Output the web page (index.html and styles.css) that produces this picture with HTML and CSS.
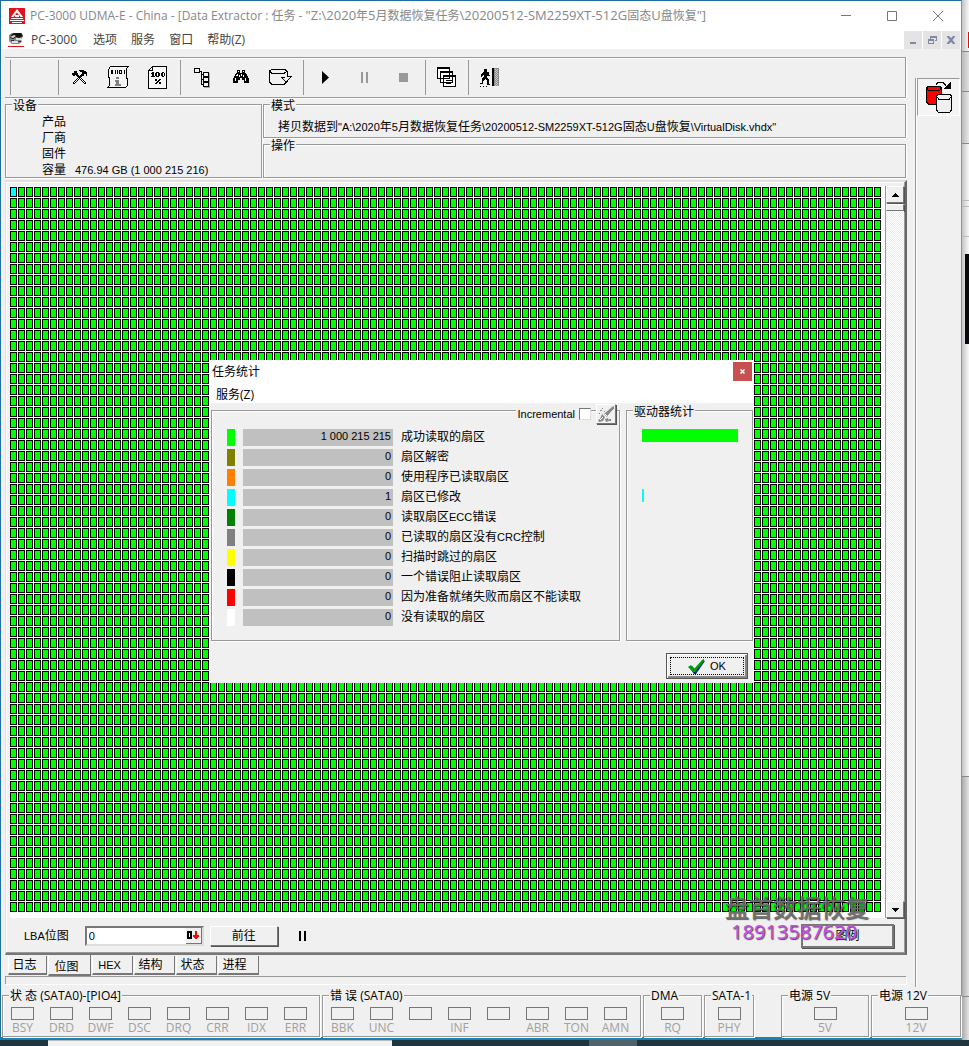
FILE: index.html
```html
<!DOCTYPE html>
<html lang="zh-CN">
<head>
<meta charset="utf-8">
<title>PC-3000 UDMA-E - Data Extractor</title>
<link rel="stylesheet" href="styles.css">
</head>
<body>
<div class="window">
  <header class="titlebar">
    <svg class="app-icon" viewBox="0 0 16 16"><path fill="#e0141c" d="M0 0h16v16H0z"/><path fill="#fff" d="M8 1l6 8h-2.500L8 4.500 4.500 9H2zM6 7h4v2H6zM2 10h12v1H2zM1 12h14v1H1zM3 14h10v1H3z"/></svg>
    <h1>PC-3000 UDMA-E - China - [Data Extractor : 任务 - <span class="path">"Z:\2020</span>年<span class="path">5</span>月数据恢复任务<span class="path">\20200512-SM2259XT-512G</span>固态<span class="path">U</span>盘恢复<span class="path">"]</span></h1>
    <div class="caption-buttons">
      <button aria-label="最小化"><svg viewBox="0 0 12 12"><path d="M1 5.500h10"/></svg></button>
      <button aria-label="最大化"><svg viewBox="0 0 12 12"><path d="M1.500 1.500h9v9h-9z"/></svg></button>
      <button aria-label="关闭"><svg viewBox="0 0 12 12"><path d="M1 1l10 10M11 1L1 11"/></svg></button>
    </div>
  </header>
  <nav class="menubar">
    <svg class="doc-icon" viewBox="0 0 16 16"><path fill="#888" d="M1 3l3-2h10l1 4-2 2 1 3-3 2H4L1 9z"/><path fill="#111" d="M3 3l3-2h7l2 3-4 2-3-1-3 2-3-1z"/><path fill="#ddd" d="M2 5l4-2 2 1-3 2zM8 6h5v2H8zM4 9h6v2H4z"/><path fill="#333" d="M3 8h3v1H3zM10 9h3v1h-3z"/><path fill="#e01010" d="M0 14h16v1H0z"/></svg>
    <button>PC-3000</button><button>选项</button><button>服务</button><button>窗口</button><button>帮助(Z)</button>
    <div class="mdi-buttons">
      <button aria-label="最小化子窗口"><svg viewBox="0 0 10 10"><path d="M2 7h6v2H2z"/></svg></button>
      <button aria-label="还原子窗口"><svg viewBox="0 0 10 10"><path d="M3 1h7v5H8V5h1V3H4v1H3zM1 4h6v5H1zM2 6v2h4V6z" fill-rule="evenodd"/></svg></button>
      <button aria-label="关闭子窗口"><svg viewBox="0 0 10 10"><path d="M1 1h2l2 2 2-2h2v1L6.500 5 9 8v1H7L5 7 3 9H1V8l2.500-3L1 2z"/></svg></button>
    </div>
  </nav>

  <div class="workspace">
    <main class="main">
      <div class="toolbar">
        <div class="tool-group blank"></div>
        <div class="tool-group g-a">
          <button aria-label="工具"><svg width="17" height="17" viewBox="0 0 17 17" shape-rendering="crispEdges"><path fill="none" stroke="#000" stroke-width="2.500" d="M2 15l9-9M6 6l9 9"/><path fill="none" stroke="#fff" d="M2.500 14.500l5-5M9 9l5.500 5.500"/><path d="M1 4h2V2h3v2l1 1v2H5V6H4v1H2V6H1zM8 1h5v1h2v1h1v4h-1V5h-2v2h-3V5h1V3H9V2H8z"/></svg></button>
          <button aria-label="信息"><svg width="23" height="23" viewBox="0 0 23 23" shape-rendering="crispEdges"><path fill="#f4f4f4" stroke="#000" d="M3.500.500h18l-2 2v8l1 4v5l-2 2H.500l2-2v-5l-1-6v-5z"/><path fill="none" stroke="#000" d="M4.500 4.500h1v3h-1zM8.500 4v4M10.500 4v4M12.500 4.500h2v3h-2zM17.500 4v4"/><path fill="#808080" d="M9 11h3v2H9zM8 14h4v4h2v2H8v-2h1v-2H8z"/></svg></button>
          <button aria-label="百分比"><svg width="19" height="23" viewBox="0 0 19 23" shape-rendering="crispEdges"><path fill="#f8f8f8" stroke="#000" d="M4.500.500h14v22H.500v-18z"/><path fill="none" stroke="#000" d="M4.500 1v3.500H1"/><path fill-rule="evenodd" d="M4 6h2v4h1v1H3v-1h1V8H3V7h1zM8 6h3v1h1v3h-1v1H8v-1H7V7h1zM9 7v3h1V7zM14 6h2v1h1v3h-1v1h-2v-1h-1V7h1zM14.500 7v3h1V7z"/><path d="M7 13h2v2H7zM11 13h2v1h-1v1h-1v1h-1v1H9v1H7v-1h1v-1h1v-1h1v-1h1zM11 16h2v2h-2z"/></svg></button>
        </div>
        <div class="tool-group g-b">
          <button aria-label="树"><svg width="17" height="21" viewBox="0 0 17 21" shape-rendering="crispEdges"><path fill="#aaa" d="M14 6h2v15h-6v-2h4z"/><path fill="#f4f4f4" stroke="#000" d="M.500 1.500h5v4h-5zM9.500 5.500h5v4h-5zM9.500 10.500h5v4h-5zM9.500 15.500h5v4h-5z"/><path fill="none" stroke="#000" d="M6 4.500h1.500v13H9M8 7.500h1M8 12.500h1"/></svg></button>
          <button aria-label="查找"><svg width="17" height="15" viewBox="0 0 17 15" shape-rendering="crispEdges"><path d="M4 0h3v3h2V0h3v3h1l3 6v4h-5v-3H9V8H7v2H5v3H0V9l3-6h1z"/><path fill="#fff" d="M5 1h1v1H5zM10 1h1v1h-1zM4 4h1v2H3zM8 4h1v2H8zM2 8h1v3H2zM12 8h1v3h-1zM6 5h1v2H6zM10 5h1v2h-1z"/></svg></button>
          <button aria-label="磁盘"><svg width="23" height="19" viewBox="0 0 23 19" shape-rendering="crispEdges"><path fill="none" stroke="#000" d="M.500 3L3 1h12l3 2-3 2.500H3zM.500 3v11L3 16.500h12l3-3V12M18.500 3v5H22v1l-5 5-5-5h4"/></svg></button>
        </div>
        <div class="tool-group g-c">
          <button aria-label="开始"><svg width="7" height="13" viewBox="0 0 7 13"><path d="M0 0l7 6.500L0 13z"/></svg></button>
          <button aria-label="暂停"><svg width="7" height="11" viewBox="0 0 7 11"><path fill="#999" d="M0 0h2v11H0zM5 0h2v11H5z"/></svg></button>
          <button aria-label="停止"><svg width="9" height="9" viewBox="0 0 9 9"><path fill="#999" d="M0 0h9v9H0z"/></svg></button>
        </div>
        <div class="tool-group g-d">
          <button aria-label="窗口列表"><svg width="19" height="21" viewBox="0 0 19 21" shape-rendering="crispEdges"><path fill="#fff" stroke="#000" d="M.500.500h12v11H.500zM3.500 4.500h12v11h-12zM6.500 8.500h12v11h-12z"/><path stroke="#000" d="M0 1.500h13M3 5.500h13M6 9.500h13M9 13.500h7M9 16.500h5"/></svg></button>
        </div>
        <div class="tool-group g-e">
          <button aria-label="退出"><svg width="19" height="19" viewBox="0 0 19 19" shape-rendering="crispEdges"><path d="M4 1h3v3h2v2l1 2H8V7L7 9l2 3v4h1v1H7v-4l-2-2-2 3v2H0v-1h2v-4l2-3V6L2 9H1V6l3-2zM0 18h1v1H0zM3 18h1v1H3zM6 18h1v1H6z"/><path d="M12 0h2v18h-2z"/><path fill="#888" d="M14 0h5v18h-5z"/><path stroke="#ccc" stroke-dasharray="1 1" d="M15.500 1v17M17.500 1v17"/><path stroke="#ccc" stroke-dasharray="1 1" d="M16.500 2v16"/></svg></button>
        </div>
      </div>

      <div class="info">
        <fieldset class="group device">
          <legend>设备</legend>
          <dl>
            <dt>产品</dt><dd></dd>
            <dt>厂商</dt><dd></dd>
            <dt>固件</dt><dd></dd>
            <dt>容量</dt><dd class="n">476.94 GB (1 000 215 216)</dd>
          </dl>
        </fieldset>
        <fieldset class="group mode">
          <legend>模式</legend>
          <p>拷贝数据到<span class="n">"A:\2020</span>年<span class="n">5</span>月数据恢复任务<span class="n">\20200512-SM2259XT-512G</span>固态<span class="n">U</span>盘恢复<span class="n">\VirtualDisk.vhdx"</span></p>
        </fieldset>
        <fieldset class="group operation">
          <legend>操作</legend>
        </fieldset>
      </div>

      <section class="page">
        <div class="map-row">
          <div class="map"><div class="sectors"><div class="current"></div></div></div>
          <div class="scrollbar">
            <button aria-label="向上滚动"><svg width="7" height="4" viewBox="0 0 7 4" shape-rendering="crispEdges"><path d="M3 0h1v1h1v1h1v1h1v1H0V3h1V2h1V1h1z"/></svg></button>
            <div class="thumb"></div>
            <div class="track"></div>
            <button aria-label="向下滚动"><svg width="7" height="4" viewBox="0 0 7 4" shape-rendering="crispEdges"><path d="M0 0h7v1H6v1H5v1H4v1H3V3H2V2H1V1H0z"/></svg></button>
          </div>
        </div>
        <div class="goto">
          <label for="lba"><span class="n">LBA</span>位图</label>
          <div class="lba-box"><input id="lba" class="n" type="text" value="0"><button aria-label="十进制"><svg width="12" height="8" viewBox="0 0 12 8" shape-rendering="crispEdges"><path fill-rule="evenodd" d="M0 0h4l1 1v6L4 8H0zM2 2v4h1V2z"/><path fill="#f00" d="M8 0h2v4h2v1l-2 3H8L6 5V4h2z"/></svg></button></div>
          <button class="raised go">前往</button>
          <button class="hold" aria-label="暂停"></button>
          <button class="raised legend-button">图例</button>
          <div class="watermark"><strong>盘首数据恢复</strong><span>18913587620</span></div>
        </div>
      </section>
      <div class="tabs">
        <button>日志</button><button class="active">位图</button><button class="n">HEX</button><button>结构</button><button>状态</button><button>进程</button>
      </div>
      <div class="progress-line"></div>
    </main>
    <aside class="side">
      <button aria-label="复制磁盘"><svg width="27" height="32" viewBox="0 0 27 32" shape-rendering="crispEdges"><path fill="#f00" stroke="#000" d="M1.500 7l2-2h11l2 2v14l-2 2h-11l-2-2z"/><path fill="none" stroke="#000" d="M1.500 7l2 2.500h11l2-2.500"/><path fill="#f0f0f0" stroke="#000" d="M11.500 15l2-2h11l2 2v14l-2 2.500h-11l-2-2.500z"/><path fill="none" stroke="#000" d="M11.500 15l2 3h11l2-3M11 3.500l2-2h5l3 3"/><path d="M26 1v7h-8z"/></svg></button>
    </aside>
  </div>

  <footer class="status">
    <fieldset class="group"><legend>状 态 (SATA0)-[PIO4]</legend>
      <ul class="leds eight"><li>BSY</li><li>DRD</li><li>DWF</li><li>DSC</li><li>DRQ</li><li>CRR</li><li>IDX</li><li>ERR</li></ul></fieldset>
    <fieldset class="group"><legend>错 误 (SATA0)</legend>
      <ul class="leds eight"><li>BBK</li><li>UNC</li><li></li><li>INF</li><li></li><li>ABR</li><li>TON</li><li>AMN</li></ul></fieldset>
    <fieldset class="group"><legend>DMA</legend><ul class="leds"><li>RQ</li></ul></fieldset>
    <fieldset class="group"><legend>SATA-1</legend><ul class="leds"><li>PHY</li></ul></fieldset>
    <fieldset class="group"><legend>电源 5V</legend><ul class="leds"><li>5V</li></ul></fieldset>
    <fieldset class="group"><legend>电源 12V</legend><ul class="leds"><li>12V</li></ul></fieldset>
  </footer>

  <div class="dialog" role="dialog" aria-labelledby="dialog-title">
    <div class="dialog-head">
      <h2 id="dialog-title">任务统计</h2>
      <button class="dialog-close" aria-label="关闭"><svg width="5" height="5" viewBox="0 0 5 5"><path stroke="#fff" stroke-width="1.500" d="M.500.500l4 4M4.500.500l-4 4"/></svg></button>
    </div>
    <div class="dialog-menu"><button>服务(Z)</button></div>
    <div class="dialog-body">
      <fieldset class="group stats">
        <div class="options">
          <label class="n" for="incremental">Incremental</label>
          <input type="checkbox" id="incremental">
          <button class="raised clear" aria-label="清除"><svg width="18" height="18" viewBox="0 0 18 18"><path fill="#888" d="M17 1v3l-7 8-3-3 8-7zM5 9l3 3-2 4-4 1-1-2 2-1zM8 14l3-1 1 3-3 1zM3 5h2v1H3zM5 3h1v1H5zM7 6h1v1H7zM2 8h1v1H2zM12 14h2v2h-2z"/><path stroke="#fff" fill="none" d="M16.500 4.500l-6 7M3 15l3-3M8 9l2 2"/></svg></button>
        </div>
        <table>
          <tr><td class="lime"></td><td class="count">1 000 215 215</td><th scope="row">成功读取的扇区</th></tr>
          <tr><td class="olive"></td><td class="count">0</td><th scope="row">扇区解密</th></tr>
          <tr><td class="orange"></td><td class="count">0</td><th scope="row">使用程序已读取扇区</th></tr>
          <tr><td class="cyan"></td><td class="count">1</td><th scope="row">扇区已修改</th></tr>
          <tr><td class="green"></td><td class="count">0</td><th scope="row">读取扇区<span class="n">ECC</span>错误</th></tr>
          <tr><td class="gray"></td><td class="count">0</td><th scope="row">已读取的扇区没有<span class="n">CRC</span>控制</th></tr>
          <tr><td class="yellow"></td><td class="count">0</td><th scope="row">扫描时跳过的扇区</th></tr>
          <tr><td class="black"></td><td class="count">0</td><th scope="row">一个错误阻止读取扇区</th></tr>
          <tr><td class="red"></td><td class="count">0</td><th scope="row">因为准备就绪失败而扇区不能读取</th></tr>
          <tr><td class="white"></td><td class="count">0</td><th scope="row">没有读取的扇区</th></tr>
        </table>
      </fieldset>
      <fieldset class="group drive">
        <legend>驱动器统计</legend>
        <div class="bars"><div class="bar lime"></div><div class="bar cyan"></div></div>
      </fieldset>
    </div>
    <div class="dialog-actions">
      <button class="ok n"><span><svg width="17" height="15" viewBox="0 0 17 15"><path fill="#003080" d="M1 8l3-1 3 3 8-9 2 1-9 13H6z"/><path fill="#00a000" d="M0 8l3-2 3 4 8-9 2-1v2L7 13H5z"/></svg>OK</span></button>
    </div>
  </div>
</div>
<div class="behind"><i class="b-title"></i><i class="b-tool"></i><i class="b-info"></i><i class="b-page"></i><i class="b-dark"></i><i class="b-page2"></i><i class="b-low"></i><i class="b-foot"></i></div>
<div class="taskbar"><i class="search"></i><i class="task"></i></div>
</body>
</html>
```
FILE: styles.css
```css
* { box-sizing: border-box; }
body {
  margin: 0;
  min-height: 100vh;
  display: grid;
  grid-template-columns: 1fr 7px;
  grid-template-rows: 1fr 6px;
  background: #f0f0f0;
  color: #000;
  font: 12px/16px "Liberation Sans", "Noto Sans CJK SC", sans-serif;
}
h1, h2, p, dl, dd, ul, fieldset, legend { margin: 0; padding: 0; border: 0; font-size: 12px; font-weight: normal; }
button { font: inherit; color: inherit; margin: 0; padding: 0; border: 0; background: none; display: flex; align-items: center; justify-content: center; }
svg { display: block; }
.n { font-size: 11px; }

.window {
  position: relative;
  display: flex;
  flex-direction: column;
  min-width: 0;
  background: #f0f0f0;
  border: solid #1e6e9e;
  border-width: 1px 1px 3px 1px;
  border-right-color: #909090;
  border-bottom-color: #1782b4;
}

.titlebar, .menubar { display: flex; align-items: center; background: #fff; padding-left: 8px; font-family: "Open Sans", "Noto Sans CJK SC", sans-serif; }
.titlebar { height: 29px; color: #888; }
.titlebar h1 { flex: 1; margin-left: 5px; white-space: nowrap; overflow: hidden; }
.titlebar .path { font-size: 13px; }
.app-icon { width: 16px; height: 16px; }
.caption-buttons { display: flex; }
.caption-buttons button { width: 46px; height: 28px; }
.caption-buttons svg { width: 12px; height: 12px; fill: none; stroke: #777; }
.menubar { height: 19px; padding-left: 7px; color: #444; }
.doc-icon { width: 16px; height: 16px; }
.menubar > button { margin-left: 7px; padding-right: 7px; }
.menubar > button:first-of-type { padding-right: 9px; }
.mdi-buttons { display: flex; gap: 1px; margin-left: auto; align-self: flex-end; padding-right: 1px; }
.mdi-buttons button { width: 18px; height: 18px; background: #e4e4e4; }
.mdi-buttons svg { width: 10px; height: 10px; fill: #8088a8; }

.workspace { flex: 1; display: flex; gap: 9px; padding: 8px 1px 0 4px; min-height: 0; }
.main { flex: 1; min-width: 0; display: flex; flex-direction: column; padding-bottom: 5px; }
.side { width: 45px; margin: 21px 0 2px; border-left: 1px solid #999; box-shadow: inset 1px 0 #fff; padding-left: 1px; }
.side button { width: 43px; height: 38px; border: 1px solid #999; border-right-color: #fff; border-bottom-color: #fff; background: #f4f4f4; }

.toolbar { display: flex; align-items: center; height: 41px; padding-left: 5px; border: solid #999; border-width: 1px 1px 1px 0; box-shadow: 1px 1px #fff, inset 0 1px #fff; }
.tool-group { display: flex; align-items: center; height: 35px; border-left: 1px solid #999; }
.tool-group button { width: 39px; height: 35px; }
.blank { width: 48px; }
.g-a { width: 122px; padding-left: 1px; }
.g-b { width: 123px; padding-left: 2px; }
.g-c { width: 122px; padding-left: 2px; }
.g-d { width: 43px; padding-left: 1px; }
.g-e { padding-left: 1px; }

.group { min-width: 0; border: 1px solid #999; box-shadow: 1px 1px #fff, inset 1px 1px #fff; }
.group > legend { float: left; margin: -6px 0 0 6px; padding: 0 1px; line-height: 14px; background: #f0f0f0; }
.info { display: grid; grid-template-columns: 257px 1fr; grid-template-rows: 34px 34px; gap: 6px 1px; margin-top: 6px; }
.device { grid-row: 1 / 3; }
.device dl { clear: left; display: grid; grid-template-columns: 33px 1fr; grid-auto-rows: 16px; padding: 1px 0 0 36px; }
.mode p { clear: left; padding: 7px 0 0 14px; line-height: 14px; white-space: nowrap; }

.page { flex: 1; display: flex; flex-direction: column; margin: 2px -1px 0 0; border: solid #e0e0e0; border-width: 2px 2px 2px 1px; border-right-color: #666; border-bottom-color: #777; box-shadow: inset -1px -1px #999, inset 1px 1px #fff; padding: 4px 1px 0 4px; }
.map-row { flex: 1; display: flex; min-height: 0; }
.map { flex: 1; background: #fff; padding: 1px 3px 5px 0; }
.sectors {
  height: 100%;
  background:
    linear-gradient(to right, transparent 7px, #fff 7px),
    linear-gradient(to bottom, transparent 10px, #fff 10px),
    linear-gradient(to right, #000 1px, transparent 1px, transparent 6px, #000 6px),
    linear-gradient(to bottom, #000 1px, #0f0 1px, #0f0 9px, #000 9px);
  background-size: 8px 11px;
}
.current { width: 7px; height: 10px; background: #0ff; border: 1px solid #000; }
.scrollbar { width: 19px; display: flex; flex-direction: column; border-left: 1px solid #999; }
.scrollbar button, .thumb, .raised { border: 1px solid #fff; border-right-color: #777; border-bottom-color: #777; box-shadow: 1px 1px #555; background: #f0f0f0; }
.scrollbar button { height: 17px; }
.thumb { height: 7px; margin-top: 1px; }
.track { flex: 1; background: repeating-conic-gradient(#fff 0 25%, #ececec 0 50%) 0 0 / 2px 2px; }
.goto { position: relative; display: flex; align-items: center; height: 35px; padding: 0 10px 0 14px; }
.lba-box { display: flex; width: 119px; height: 20px; margin-left: 16px; border: 2px solid #777; border-right-color: #ddd; border-bottom-color: #ddd; background: #fff; }
.lba-box input { flex: 1; min-width: 0; border: 0; padding: 0 0 0 2px; background: none; font-family: inherit; }
.lba-box button { width: 16px; background: #f0f0f0; border-right: 1px solid #777; border-bottom: 1px solid #777; }
.go { width: 68px; height: 20px; margin-left: 6px; }
.hold { width: 7px; height: 10px; margin-left: 21px; border: solid #000; border-width: 0 2px; }
.legend-button { width: 93px; height: 24px; margin-left: auto; border-width: 2px; border-color: #777; }
.watermark { position: absolute; right: 35px; top: -25px; display: flex; flex-direction: column; align-items: center; white-space: nowrap; pointer-events: none; }
.watermark strong { font: 500 24px/28px "Noto Sans CJK SC", sans-serif; color: rgba(110, 110, 110, .9); text-shadow: 1px 1px 1px rgba(0, 0, 0, .6); }
.watermark span { font: 500 20px/22px "Open Sans", sans-serif; color: #c84ce8; text-shadow: 1px 1px 1px #444; margin-right: 6px; }

.tabs { display: flex; align-items: flex-start; gap: 1px; padding: 1px 0 0 3px; height: 21px; }
.tabs button { width: 41px; height: 19px; padding-right: 8px; border: 1px solid #fff; border-top: 0; border-right-color: #777; border-bottom: 2px solid #777; }
.tabs button:first-child { width: 39px; padding-right: 6px; }
.tabs .active { width: 43px; height: 21px; margin-top: -1px; padding: 4px 6px 0 0; background: #f0f0f0; }
.tabs .n { padding-right: 6px; }
.progress-line { height: 8px; border: solid #999; border-width: 1px 0 0 1px; box-shadow: 1px 1px #fff; }

.status { display: grid; grid-template-columns: 318fr 319fr 59fr 50fr 23fr 88fr 90fr; column-gap: 2px; margin-top: 6px; height: 42px; padding-left: 1px; font-family: "Open Sans", "Noto Sans CJK SC", sans-serif; }
.status .group:nth-child(n+5) { grid-column: 6; }
.status .group:nth-child(6) { grid-column: 7; }
.status .group > legend { line-height: 16px; margin-top: -8px; white-space: nowrap; }
.leds { clear: left; list-style: none; display: grid; padding-top: 3px; }
.leds.eight { grid-template-columns: repeat(8, 39px); }
.leds li { height: 28px; text-align: center; color: #a0a0a0; line-height: 16px; }
.leds li::before { content: ""; display: block; width: 21px; height: 11px; margin: 0 auto; border: 1px solid #777; }

.dialog { position: absolute; left: 209px; top: 359px; width: 543px; background: #f0f0f0; }
.dialog-head, .dialog-menu { background: #fff; font-family: "Open Sans", "Noto Sans CJK SC", sans-serif; }
.dialog-head { display: flex; justify-content: space-between; height: 24px; padding: 2px 1px 0 2px; }
.dialog-head h2 { line-height: 20px; }
.dialog-close { width: 19px; height: 19px; background: #c75050; }
.dialog-menu { height: 19px; padding-left: 6px; }
.dialog-menu button { height: 21px; }
.dialog-body { display: grid; grid-template-columns: 409px 1fr; gap: 6px; padding: 7px 0 0 1px; height: 238px; }
.options { display: flex; align-items: center; justify-content: flex-end; height: 20px; margin: -7px 3px 0 0; }
.options label { background: #f0f0f0; padding: 0 4px 0 2px; line-height: 14px; }
.options input { appearance: none; width: 12px; height: 12px; margin: 0 5px 0 0; background: #fff; border: 1px solid #777; border-right-color: #ddd; border-bottom-color: #ddd; }
.clear { width: 20px; height: 20px; }
.stats table { border-spacing: 8px 3px; margin-left: 7px; margin-top: 2px; }
.stats td, .stats th { height: 17px; padding: 0; line-height: 15px; vertical-align: top; text-align: left; font-weight: normal; white-space: nowrap; font-size: 12px; }
.stats th { line-height: 17px; }
.stats td:first-child { width: 8px; }
.stats td.count { width: 150px; padding-right: 2px; background: #c0c0c0; text-align: right; font-size: 11px; }
.bars { clear: left; padding: 10px 14px 0 15px; }
.bar { height: 13px; margin-bottom: 47px; }
.bar.cyan { width: 2px; }
.lime { background: #0f0; } .olive { background: #808000; } .orange { background: #ff8000; } .cyan { background: #0ff; } .green { background: #008000; }
.gray { background: #808080; } .yellow { background: #ff0; } .black { background: #000; } .red { background: #f00; } .white { background: #fff; }
.dialog-actions { display: flex; justify-content: flex-end; padding: 12px 5px 4px; }
.ok { width: 82px; height: 26px; padding: 2px; border: 1px solid #555; box-shadow: inset 1px 1px #fff, inset -2px -2px #888; }
.ok span { flex: 1; height: 18px; display: flex; align-items: center; justify-content: center; gap: 5px; margin: 0 1px; border: 1px dotted #000; }

.behind { display: flex; flex-direction: column; background: linear-gradient(to right, #c4c4c4, #f8f8f8); }
.b-title { height: 52px; border-bottom: 1px solid #888; background: linear-gradient(#e01010, #e01010) right 32px / 1px 16px no-repeat; }
.b-tool { height: 40px; border-bottom: 1px solid #888; background: linear-gradient(to right, #bbb, #e0e0e0); }
.b-info { height: 52px; border-bottom: 1px solid #888; background: linear-gradient(to right, #bbb, #e8e8e8); }
.b-page { height: 110px; background: linear-gradient(#bbb, #bbb) 0 56px / 100% 1px no-repeat, linear-gradient(#bbb, #bbb) 0 62px / 100% 1px no-repeat, linear-gradient(#bbb, #bbb) 0 92px / 100% 1px no-repeat; }
.b-dark { height: 90px; margin-left: 3px; background: #08080c; }
.b-page2 { flex: 1; border-bottom: 1px solid #888; }
.b-low { height: 220px; border-bottom: 1px solid #888; background: linear-gradient(to right, #aaa, #e4e4e4); }
.b-foot { height: 43px; background: linear-gradient(to right, #aaa, #e4e4e4); }
.taskbar { grid-column: 1 / 3; display: flex; background: #20363e; padding-left: 48px; }
.search { width: 344px; background: #f2f2f2; border-top: 1px solid #bbb; }
.task { width: 48px; margin-left: 197px; background: #50626a; }
```
